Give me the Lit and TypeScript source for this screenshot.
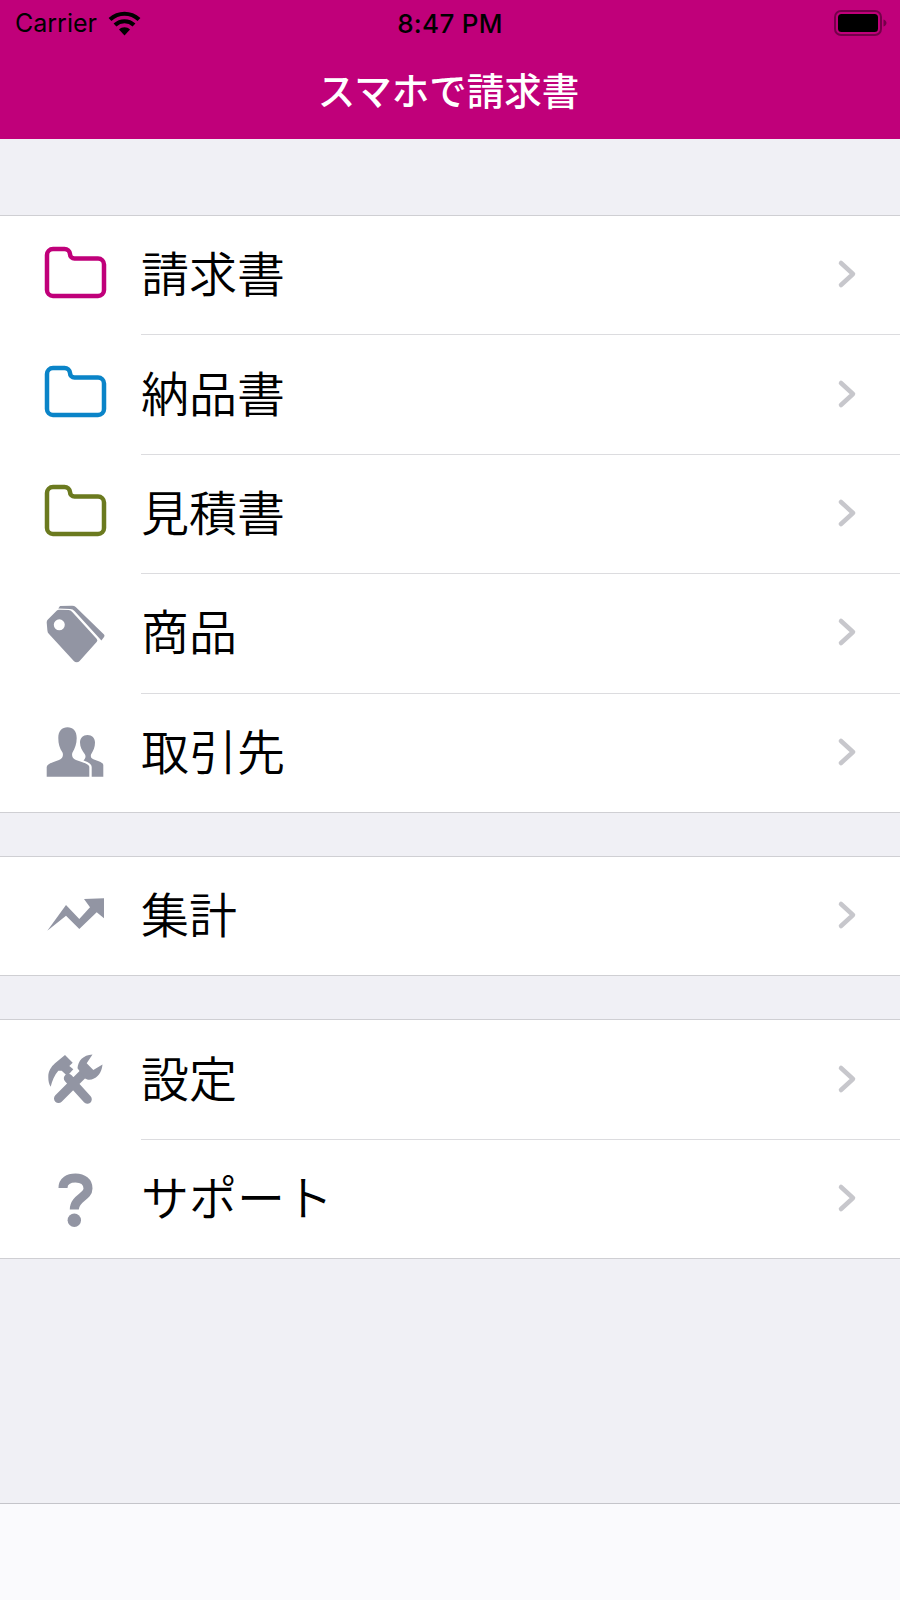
import { LitElement, html, css, svg } from 'lit';
import { customElement } from 'lit/decorators.js';

const folder = (color: string) => svg`
  <path d="M6 50V15a6 6 0 0 1 6-6h11.500a5.500 5.500 0 0 1 5.500 5a4.500 4.500 0 0 0 4.500 4.500H57a6 6 0 0 1 6 6V50a6 6 0 0 1-6 6H12a6 6 0 0 1-6-6z"
    fill="none" stroke=${color} stroke-width="4.500" stroke-linejoin="round" />`;

const tag = svg`
  <g transform="translate(0 5.500)">
    <path fill-rule="evenodd" d="M5.700 19a4 4 0 0 1 1.200-3l9-9a3 3 0 0 1 2.200-.8l9.500.4a5 5 0 0 1 3.400 1.600l24.600 27a2.500 2.500 0 0 1 0 3.400L38.600 57.600a4 4 0 0 1-5.800 0L8 30.500a4.500 4.500 0 0 1-1.600-3.400zM18.300 15.800a5.500 5.500 0 1 0 0 11a5.500 5.500 0 1 0 0-11z" />
    <path d="M19 2.600l11.500-.4a5 5 0 0 1 4.200 1.400L63 31a2 2 0 0 1 .2 2.300l-2.800 3.700L33.500 7.500a6.500 6.500 0 0 0-4.200-2l-12-.6z" />
  </g>`;

const people = svg`
  <path d="M5.700 59.700V50C6 47 12 45 18 43C22 41.500 22.500 38 21.500 35.500C18.500 31 17.300 27 17.300 21C17.300 14 21 10.300 26.500 10.300C32 10.300 35.700 14 35.700 21C35.700 27 34 31 31.500 35.500C30.500 38 31 41.500 35 43C41 45 48.300 47 48.300 50V59.700Z" />
  <path d="M50.700 59.700V50C50.700 47 47 45 42.500 43.500C44.500 41 45 39.500 44 37.500C41 33.500 39 30 39 25.500C39 21 42 18 46.500 18C51 18 54 21 54 25.500C54 30 52.500 33.500 50 37.500C49.500 40 50 41.500 53 42.500C57 44 62.300 45.500 62.300 48V59.700Z" />`;

const chart = svg`
  <path d="M6.300 50.700L25 25L38.300 39L49 27.300L43 19L63 18.300V38.300L55.700 32.300L38.300 49L25 35.700Z" />`;

const tools = svg`
  <path d="M44 28L17.500 54.500M27.300 34.300L46.300 55.300" fill="none" stroke="#9295a3" stroke-width="9" stroke-linecap="round" />
  <path d="M36.500 24.300C37 17 42 11 51.500 10.500L45.700 19.300L52.300 26L61.500 20.500C61 26 58.500 32 53 34.500C50 36 47.300 36.500 44 34.500Z" />
  <path d="M24 11L31.700 18.700L28.300 22L32.300 25.300L26.300 32L20.700 26.700L17.300 26.700C13.500 31 11 37 9.700 42.700C8 40 7.300 37.700 7.300 33C7.300 27 10 23 14 19.300Z" />`;

const question = svg`
  <path d="M22 25C22 18 27.500 15 34.500 15C42 15 47 19 47 25.500C47 34 33.300 35 33.300 46.500" fill="none" stroke="#9295a3" stroke-width="9" />
  <circle cx="33.300" cy="57.300" r="6.700" />`;

interface MenuRow {
  label: string;
  icon: unknown;
}

const groups: MenuRow[][] = [
  [
    { label: '請求書', icon: folder('#c0007a') },
    { label: '納品書', icon: folder('#0a84c8') },
    { label: '見積書', icon: folder('#6b7a1f') },
    { label: '商品', icon: tag },
    { label: '取引先', icon: people },
  ],
  [{ label: '集計', icon: chart }],
  [
    { label: '設定', icon: tools },
    { label: 'サポート', icon: question },
  ],
];

@customElement('app-root')
export class AppRoot extends LitElement {
  static styles = css`
    :host {
      display: flex;
      flex-direction: column;
      height: 1600px;
      background: #f0f0f5;
      font-family: 'Noto Sans CJK JP', 'Liberation Sans', sans-serif;
      color: #000;
    }
    .header {
      height: 139px;
      background: #c0007a;
      box-sizing: border-box;
      display: flex;
      flex-direction: column;
    }
    .status {
      height: 46px;
      display: grid;
      grid-template-columns: 1fr auto 1fr;
      align-items: center;
      padding: 0 12px 0 15px;
      font-family: Inter, 'Liberation Sans', sans-serif;
      font-size: 25px;
    }
    .carrier {
      display: flex;
      align-items: center;
      gap: 11px;
    }
    .time {
      font-size: 26px;
      font-weight: 500;
      letter-spacing: 0.3px;
      margin-right: 3px;
    }
    .battery {
      justify-self: end;
      display: block;
    }
    .title {
      text-align: center;
      color: #fff;
      font-size: 37.5px;
      font-weight: 500;
      line-height: 44px;
      margin-top: 21px;
      padding-right: 3px;
    }
    .group {
      background: #fff;
      border-top: 1px solid #cfcfd3;
    }
    .first {
      margin-top: 76px;
    }
    .next {
      margin-top: 43px;
    }
    .row {
      display: flex;
      align-items: center;
      height: 119.4px;
      box-sizing: border-box;
      border-bottom: 1px solid #cfcfd3;
    }
    .row.inset {
      border-bottom: none;
    }
    .icon {
      display: block;
      width: 70px;
      height: 70px;
      margin: 0 0 2px 41px;
      fill: #9295a3;
      flex: none;
    }
    .body {
      flex: 1;
      align-self: stretch;
      display: flex;
      align-items: center;
      justify-content: space-between;
      margin-left: 30px;
      padding-right: 43px;
    }
    .row.inset .body {
      border-bottom: 1px solid #dcdcdf;
    }
    .label {
      font-size: 48px;
      font-weight: 350;
      line-height: 60px;
      margin-bottom: 8px;
    }
    .chevron {
      display: block;
      width: 20px;
      height: 30px;
      margin-bottom: 2px;
    }
    .tabbar {
      margin-top: auto;
      height: 97px;
      box-sizing: border-box;
      background: #fafafd;
      border-top: 1px solid #c4c4ca;
    }
  `;

  private renderRow(row: MenuRow, inset: boolean) {
    return html`
      <div class="row ${inset ? 'inset' : ''}">
        <svg class="icon" viewBox="0 0 70 70">${row.icon}</svg>
        <div class="body">
          <span class="label">${row.label}</span>
          <svg class="chevron" viewBox="0 0 20 30">
            <path d="M4 4L16 15L4 26" fill="none" stroke="#c7c7cc" stroke-width="4.500" stroke-linecap="round" stroke-linejoin="round" />
          </svg>
        </div>
      </div>
    `;
  }

  render() {
    return html`
      <div class="header">
        <div class="status">
          <div class="carrier">
            <span>Carrier</span>
            <svg width="33" height="25" viewBox="0 0 33 25">
              <path d="M2 8.500C10.500 .8 22.500 .8 31 8.500M7 14C12.500 9 20.500 9 26 14" fill="none" stroke="#000" stroke-width="4.200" />
              <path d="M11 18.500C14 15.500 19 15.500 22 18.500L16.500 24.500Z" fill="#000" />
            </svg>
          </div>
          <span class="time">8:47 PM</span>
          <svg class="battery" width="54" height="26" viewBox="0 0 54 26">
            <rect x="1" y="1" width="46" height="24" rx="6" fill="none" stroke="#000" stroke-opacity=".4" stroke-width="2" />
            <rect x="4" y="4" width="40" height="18" rx="3.500" fill="#000" />
            <path d="M49.500 9.500c2 .6 3 2 3 3.500s-1 2.900-3 3.500z" fill="#000" fill-opacity=".4" />
          </svg>
        </div>
        <div class="title">スマホで請求書</div>
      </div>
      ${groups.map(
        (rows, g) => html`
          <div class="group ${g === 0 ? 'first' : 'next'}">
            ${rows.map((row, i) => this.renderRow(row, i < rows.length - 1))}
          </div>
        `
      )}
      <div class="tabbar"></div>
    `;
  }
}
